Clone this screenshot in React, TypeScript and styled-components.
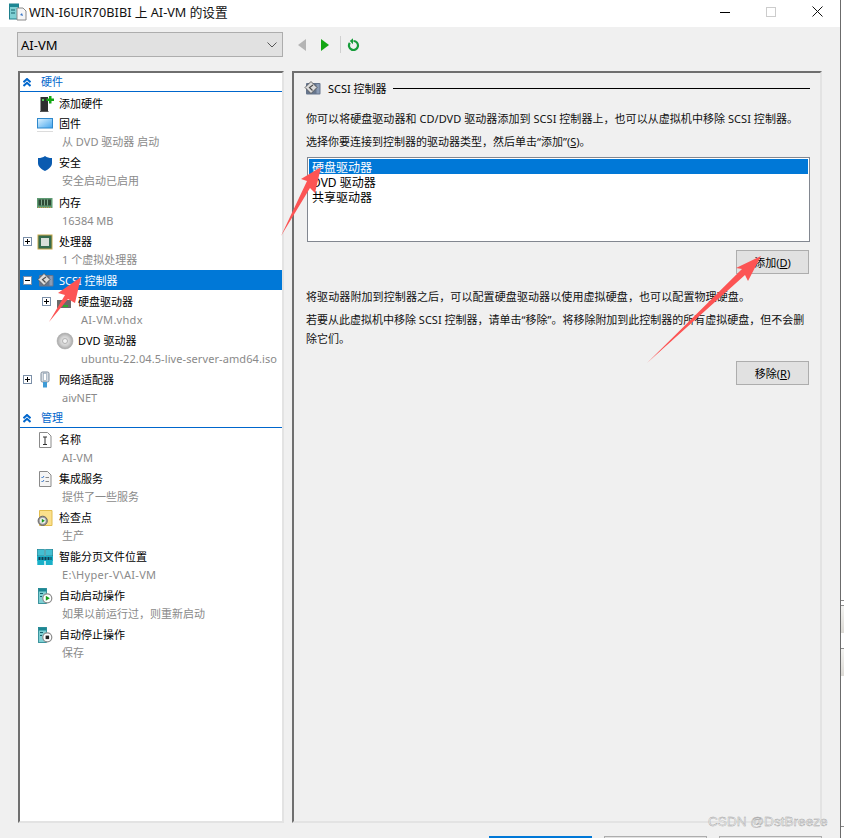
import React from "react";
import styled, { createGlobalStyle } from "styled-components";

const FONT = `"Noto Sans", "Noto Sans CJK SC", sans-serif`;

const Global = createGlobalStyle`
  html, body { margin: 0; padding: 0; background: #fff; width: 844px; height: 838px; overflow: hidden; }
  body { font-family: ${FONT}; font-size: 11px; color: #000; }
  * { box-sizing: border-box; }
`;

const Stage = styled.div`
  position: relative;
  display: flex;
  width: 844px;
  height: 838px;
  overflow: hidden;
  background: #fff;
`;
const Dialog = styled.div`
  display: flex;
  flex-direction: column;
  width: 841px;
  height: 838px;
  background: #f0f0f0;
  border-right: 1px solid #6b6b6b;
  overflow: hidden;
`;
const TitleBar = styled.header`
  display: flex;
  align-items: center;
  flex: 0 0 27px;
  padding: 0 0 4px 9px;
  background: #fff;
`;
const TitleText = styled.span`
  margin-left: 2px;
  font-size: 12.7px;
  flex: 1;
  color: #111;
`;
const WinButton = styled.div`
  display: flex;
  align-items: center;
  justify-content: center;
  width: 46px;
  height: 22px;
`;
const Toolbar = styled.div`
  display: flex;
  align-items: center;
  flex: 0 0 44px;
  padding: 0 18px 9px 17px;
`;
const VmSelect = styled.div`
  display: flex;
  align-items: center;
  justify-content: space-between;
  width: 266px;
  height: 25px;
  padding: 0 5px 0 3px;
  background: #e1e1e1;
  border: 1px solid #adadad;
  font-size: 13px;
`;
const NavGroup = styled.div`
  display: flex;
  align-items: center;
  margin-left: 15px;
`;
const NavSep = styled.span`
  width: 1px;
  height: 17px;
  margin: 0 6px 0 11px;
  background: #d0d0d0;
`;
const Body = styled.div`
  display: flex;
  gap: 8px;
  padding: 0 18px;
  flex: 0 0 752px;
`;
const Sunken = styled.section`
  height: 752px;
  border-style: solid;
  border-width: 2px;
  border-color: #6f6f6f #e3e3e3 #e3e3e3 #6f6f6f;
`;
const TreePanel = styled(Sunken)`
  width: 266px;
  background: #fff;
  overflow: hidden;
  & > :first-child {
    margin-top: -1px;
  }
`;
const SectionHead = styled.div`
  display: flex;
  align-items: center;
  height: 20px;
  margin-bottom: 1px;
  padding: 1px 0 0 3px;
  border-bottom: 1px solid #0066cc;
  color: #0066cc;
  font-size: 11px;
  line-height: 18px;
`;
const SectionLabel = styled.span`
  margin-left: 10px;
`;
const Row = styled.div<{ $depth: number; $selected?: boolean; $nudge?: boolean }>`
  display: flex;
  align-items: center;
  height: 20px;
  margin-top: ${(p) => (p.$nudge ? "1px" : "0")};
  padding-left: ${(p) => 3 + p.$depth * 19}px;
  background: ${(p) => (p.$selected ? "#0078d7" : "transparent")};
  color: ${(p) => (p.$selected ? "#fff" : "#000")};
  font-size: 11px;
  white-space: nowrap;
`;
const ExpanderSlot = styled.span`
  display: inline-flex;
  flex: 0 0 9px;
  height: 9px;
  margin-right: 5px;
`;
const Expander = styled.span<{ $open?: boolean }>`
  position: relative;
  display: block;
  width: 9px;
  height: 9px;
  background: #fff;
  border: 1px solid #7b8fa8;
  &::before {
    content: "";
    position: absolute;
    left: 1px;
    top: 3px;
    width: 5px;
    height: 1px;
    background: #000;
  }
  &::after {
    content: "";
    display: ${(p) => (p.$open ? "none" : "block")};
    position: absolute;
    left: 3px;
    top: 1px;
    width: 1px;
    height: 5px;
    background: #000;
  }
`;
const IconSlot = styled.span`
  display: inline-flex;
  flex: 0 0 18px;
  height: 18px;
  margin-right: 4px;
`;
const Sub = styled.div<{ $depth: number; $track?: number }>`
  height: 19px;
  line-height: 18px;
  padding-left: ${(p) => 42 + p.$depth * 19}px;
  color: #8a8a8a;
  font-size: 11px;
  letter-spacing: ${(p) => p.$track ?? 0}px;
  white-space: nowrap;
`;
const MainPanel = styled(Sunken)`
  width: 530px;
  padding: 7px 10px 0 12px;
  background: #f0f0f0;
`;
const MainHead = styled.div`
  display: flex;
  align-items: center;
  height: 16px;
  font-size: 11px;
  margin-left: -2px;
`;
const MainTitle = styled.span`
  margin: 0 6px;
  white-space: nowrap;
`;
const HeadRule = styled.span`
  flex: 1;
  height: 1px;
  background: #000;
`;
const Para = styled.p<{ $top: number; $lh?: number; $track?: number }>`
  margin: ${(p) => p.$top}px 0 0;
  font-size: 11px;
  line-height: ${(p) => p.$lh ?? 16}px;
  letter-spacing: ${(p) => p.$track ?? 0}px;
  color: #111;
`;
const Listbox = styled.div`
  height: 85px;
  margin: 7px 0 0 1px;
  padding: 1px;
  background: #fff;
  border: 1px solid #828790;
`;
const ListItem = styled.div<{ $selected?: boolean }>`
  height: 15px;
  padding: 2px 0 0 3px;
  line-height: 13px;
  font-size: 12px;
  white-space: nowrap;
  background: ${(p) => (p.$selected ? "#0078d7" : "transparent")};
  color: ${(p) => (p.$selected ? "#fff" : "#000")};
`;
const ButtonRow = styled.div<{ $top: number }>`
  display: flex;
  justify-content: flex-end;
  margin-top: ${(p) => p.$top}px;
  padding-right: 1px;
`;
const Btn = styled.div`
  display: flex;
  align-items: center;
  justify-content: center;
  width: 73px;
  height: 24px;
  background: #e1e1e1;
  border: 1px solid #adadad;
  font-size: 11px;
`;
const Footer = styled.div`
  display: flex;
  justify-content: flex-end;
  gap: 12px;
  padding: 13px 18px 0;
`;
const FootBtn = styled.div<{ $primary?: boolean }>`
  width: 103px;
  height: 23px;
  background: ${(p) => (p.$primary ? "#0078d7" : "#e1e1e1")};
  border: 1px solid ${(p) => (p.$primary ? "#0078d7" : "#adadad")};
`;
const EdgeStrip = styled.aside`
  flex: 1;
  display: flex;
  flex-direction: column;
`;
const EdgeTile = styled.div<{ $h: number; $tile?: boolean; $rule?: boolean }>`
  height: ${(p) => p.$h}px;
  background: ${(p) => (p.$tile ? "linear-gradient(#f4f4f2, #dcdad5)" : "#fff")};
  border-top: ${(p) => (p.$tile || p.$rule ? "1px solid #8c8c8c" : "none")};
`;
const Watermark = styled.div`
  position: absolute;
  left: 708px;
  top: 813px;
  font-family: "Liberation Sans", sans-serif;
  font-size: 13.6px;
  line-height: 18px;
  color: #f4f4f4;
  -webkit-text-stroke: 0.4px #a0a0a0;
  white-space: nowrap;
`;
const ArrowLayer = styled.svg`
  position: absolute;
  left: 0;
  top: 0;
  pointer-events: none;
`;
const Key = styled.span`
  text-decoration: underline;
`;
const Svg: React.FC<{ children: React.ReactNode }> = ({ children }) => (
  <svg width="18" height="18" viewBox="0 0 18 18" style={{ overflow: "visible" }}>{children}</svg>
);

const ScsiGlyph = () => (
  <Svg>
    <rect x="2" y="4" width="14.500" height="11.500" rx="1" fill="#66758c" />
    <rect x="12.500" y="5" width="3" height="9.500" fill="#8b9cb5" />
    <path d="M1 8.500L7 2.500l6 6-6 6z" fill="#dcdcdc" stroke="#4d4d4d" strokeWidth="0.800" />
    <path d="M9 6L5.500 8.500 8.500 11.500" fill="none" stroke="#4d4d4d" strokeWidth="1.200" />
  </Svg>
);
const ServerBase = () => (
  <>
    <rect x="1.500" y="2.500" width="8" height="15" fill="#7fd0d4" stroke="#1e7f8c" strokeWidth="0.800" />
    <rect x="1.500" y="2.500" width="8" height="3" fill="#1c8794" />
    <path d="M3 7.500h3M3 10.500h2" stroke="#14606a" strokeWidth="1" />
  </>
);
const icons: Record<string, React.ReactNode> = {
  add: (
    <Svg>
      <path d="M3 18h8.500v-1H3z" fill="#555" />
      <rect x="3.500" y="3" width="7.500" height="14" fill="#2f2f2f" />
      <rect x="5" y="5" width="2" height="2" fill="#59c75c" />
      <path d="M9.500 4.500H12V2h2.500v2.500H17V7h-2.500v2.500H12V7H9.500z" fill="#13a613" />
    </Svg>
  ),
  firmware: (
    <Svg>
      <defs>
        <linearGradient id="scr" x1="0" y1="0" x2="1" y2="1">
          <stop offset="0" stopColor="#dff3ff" />
          <stop offset="1" stopColor="#44a6ee" />
        </linearGradient>
      </defs>
      <rect x="0.500" y="4.500" width="15" height="9.500" fill="url(#scr)" stroke="#2e88cc" />
      <path d="M0 17.500h16" stroke="#dcdcdc" />
    </Svg>
  ),
  shield: (
    <Svg>
      <path d="M8 3c2 1.500 4 2 7 2v5c0 3.500-3 6-7 8-4-2-7-4.500-7-8V5c3 0 5-.5 7-2z" fill="#0a5bb0" />
    </Svg>
  ),
  memory: (
    <Svg>
      <rect x="0" y="5" width="15.500" height="10" fill="#5f9b73" />
      <path d="M1.500 6.500h12.500v6H1.500z" fill="#2d4a36" />
      <path d="M4.500 6.500v6M7.500 6.500v6M10.500 6.500v6" stroke="#7fa98c" />
      <path d="M1 14.500h14" stroke="#c69a4c" strokeDasharray="1 1" />
    </Svg>
  ),
  cpu: (
    <Svg>
      <rect x="0.500" y="2.500" width="15" height="15" fill="#c5a64a" />
      <rect x="1.500" y="3.500" width="13" height="13" fill="#356b4d" />
      <rect x="4" y="6" width="8" height="8" fill="#d9dfd8" />
    </Svg>
  ),
  scsi: <ScsiGlyph />,
  hdd: (
    <Svg>
      <rect x="1" y="8" width="14" height="8" fill="#6a6a6a" />
      <rect x="7" y="13" width="5" height="2" fill="#2fa82f" />
    </Svg>
  ),
  dvd: (
    <Svg>
      <defs>
        <radialGradient id="disc">
          <stop offset="0" stopColor="#f4f4f4" />
          <stop offset="0.600" stopColor="#cfcfcf" />
          <stop offset="1" stopColor="#a8a8a8" />
        </radialGradient>
      </defs>
      <circle cx="9" cy="10" r="8" fill="url(#disc)" stroke="#aaa" strokeWidth="0.500" />
      <circle cx="9" cy="10" r="2.500" fill="#f2f2f2" stroke="#999" strokeWidth="0.700" />
    </Svg>
  ),
  net: (
    <Svg>
      <rect x="4" y="2" width="8" height="10" rx="1.500" fill="#d8dde3" stroke="#7d8c9c" />
      <rect x="6.500" y="3.500" width="3" height="7" fill="#fff" stroke="#8da0b3" strokeWidth="0.600" />
      <rect x="6" y="12" width="4" height="5.500" fill="#3f9bd6" />
    </Svg>
  ),
  name: (
    <Svg>
      <path d="M2.500 2.500h8l3.500 3.500v11.500H2.500z" fill="#fff" stroke="#8a8a8a" />
      <path d="M6 7h4M6 14.500h4M8 7v7.500" stroke="#333" fill="none" />
    </Svg>
  ),
  integration: (
    <Svg>
      <path d="M2.500 2.500h8l3.500 3.500v11.500H2.500z" fill="#f5f5f5" stroke="#8a8a8a" />
      <path d="M4.500 8l1 1 1.500-2M4.500 12l1 1 1.500-2" stroke="#3a78c8" fill="none" />
      <path d="M8.500 8.500h3.500M8.500 12.500h3.500" stroke="#888" />
    </Svg>
  ),
  checkpoint: (
    <Svg>
      <path d="M2.500 2.500h12.500v15H2.500z" fill="#fbe08c" stroke="#e2bd4e" />
      <circle cx="5.700" cy="12.800" r="4.600" fill="#9a9a9a" stroke="#666" />
      <circle cx="5.700" cy="12.800" r="3" fill="#ececec" />
      <path d="M4.800 10.800l3 2-3 2z" fill="#1a9a1a" />
    </Svg>
  ),
  paging: (
    <Svg>
      <rect x="0.300" y="2.300" width="7" height="6.500" fill="#42bfd2" stroke="#127a8c" strokeWidth="0.600" />
      <rect x="8.700" y="2.300" width="7" height="6.500" fill="#42bfd2" stroke="#127a8c" strokeWidth="0.600" />
      <rect x="0" y="9" width="16" height="5" fill="#19b0c8" />
      <path d="M1.500 11.500h13" stroke="#0e3f55" strokeWidth="3" strokeDasharray="2 1" />
      <rect x="0.300" y="14" width="7" height="4" fill="#19b0c8" />
      <rect x="8.700" y="14" width="7" height="4" fill="#19b0c8" />
    </Svg>
  ),
  start: (
    <Svg>
      <ServerBase />
      <circle cx="10.300" cy="12.300" r="4.500" fill="#fff" stroke="#8c8c8c" strokeWidth="1.200" />
      <path d="M8.800 9.800l4 2.500-4 2.500z" fill="#18a018" />
    </Svg>
  ),
  stop: (
    <Svg>
      <ServerBase />
      <circle cx="10.300" cy="12.300" r="4.500" fill="#fff" stroke="#8c8c8c" strokeWidth="1.200" />
      <rect x="8.600" y="10.600" width="3.500" height="3.500" fill="#222" />
    </Svg>
  ),
};

const Chevrons = () => (
  <svg width="8" height="9" viewBox="0 0 8 9">
    <path d="M.5 4.200L4 1l3.500 3.200M.5 8L4 4.800 7.500 8" fill="none" stroke="#0066cc" strokeWidth="2" />
  </svg>
);

type Item = {
  name: string;
  sub?: string;
  icon: string;
  expander?: "open" | "closed";
  depth?: number;
  selected?: boolean;
  nudge?: boolean;
  track?: number;
};

const hardware: Item[] = [
  { name: "添加硬件", icon: "add" },
  { name: "固件", sub: "从 DVD 驱动器 启动", icon: "firmware" },
  { name: "安全", sub: "安全启动已启用", icon: "shield" },
  { name: "内存", sub: "16384 MB", icon: "memory", nudge: true },
  { name: "处理器", sub: "1 个虚拟处理器", icon: "cpu", expander: "closed" },
  { name: "SCSI 控制器", icon: "scsi", expander: "open", selected: true },
  { name: "硬盘驱动器", sub: "AI-VM.vhdx", icon: "hdd", expander: "closed", depth: 1, nudge: true, track: 0.3 },
  { name: "DVD 驱动器", sub: "ubuntu-22.04.5-live-server-amd64.iso", icon: "dvd", depth: 1, track: 0.09 },
  { name: "网络适配器", sub: "aivNET", icon: "net", expander: "closed" },
];
const management: Item[] = [
  { name: "名称", sub: "AI-VM", icon: "name" },
  { name: "集成服务", sub: "提供了一些服务", icon: "integration" },
  { name: "检查点", sub: "生产", icon: "checkpoint" },
  { name: "智能分页文件位置", sub: "E:\\Hyper-V\\AI-VM", icon: "paging", track: 0.3 },
  { name: "自动启动操作", sub: "如果以前运行过，则重新启动", icon: "start" },
  { name: "自动停止操作", sub: "保存", icon: "stop" },
];

const TreeItem: React.FC<{ item: Item }> = ({ item }) => {
  const depth = item.depth ?? 0;
  return (
    <>
      <Row $depth={depth} $selected={item.selected} $nudge={item.nudge}>
        <ExpanderSlot>{item.expander && <Expander $open={item.expander === "open"} />}</ExpanderSlot>
        <IconSlot>{icons[item.icon]}</IconSlot>
        {item.name}
      </Row>
      {item.sub && <Sub $depth={depth} $track={item.track}>{item.sub}</Sub>}
    </>
  );
};

export default function App() {
  return (
    <Stage>
      <Global />
      <Dialog>
        <TitleBar>
          <svg width="18" height="18" viewBox="0 0 18 18">
            <rect x="0.500" y="1" width="9" height="15" fill="#7fd0d4" stroke="#1e7f8c" />
            <rect x="0.500" y="1" width="9" height="3" fill="#1c8794" />
            <path d="M2 7h4M2 10h4" stroke="#14606a" />
            <path d="M8 5h6l3 3v9H8z" fill="#f6f6f6" stroke="#8a8a8a" />
            <path d="M11 12l2-2 1 3z" fill="#3a78c8" />
          </svg>
          <TitleText>WIN-I6UIR70BIBI 上 AI-VM 的设置</TitleText>
          <WinButton>
            <svg width="10" height="10" viewBox="0 0 10 10"><path d="M0 5.500h10" stroke="#000" /></svg>
          </WinButton>
          <WinButton>
            <svg width="10" height="10" viewBox="0 0 10 10"><rect x="0.500" y="0.500" width="9" height="9" fill="none" stroke="#ccc" /></svg>
          </WinButton>
          <WinButton>
            <svg width="11" height="11" viewBox="0 0 11 11"><path d="M.5.500l10 10M10.500.500l-10 10" stroke="#111" /></svg>
          </WinButton>
        </TitleBar>
        <Toolbar>
          <VmSelect>
            AI-VM
            <svg width="10" height="6" viewBox="0 0 10 6"><path d="M.5.500L5 5l4.500-4.500" fill="none" stroke="#555" /></svg>
          </VmSelect>
          <NavGroup>
            <svg width="8" height="12" viewBox="0 0 8 12"><path d="M8 0v12L0 6z" fill="#b4b4b4" /></svg>
            <svg width="8" height="12" viewBox="0 0 8 12" style={{ marginLeft: 15 }}><path d="M0 0v12l8-6z" fill="#13a613" /></svg>
            <NavSep />
            <svg width="13" height="13" viewBox="0 0 13 13">
              <path d="M6.500 3A4.500 4.500 0 1 1 2.800 4.900" fill="none" stroke="#169c3a" strokeWidth="2.200" />
              <path d="M6 .2v6L2.800 3z" fill="#169c3a" />
            </svg>
          </NavGroup>
        </Toolbar>
        <Body>
          <TreePanel>
            <SectionHead><Chevrons /><SectionLabel>硬件</SectionLabel></SectionHead>
            {hardware.map((item) => <TreeItem key={item.name} item={item} />)}
            <SectionHead><Chevrons /><SectionLabel>管理</SectionLabel></SectionHead>
            {management.map((item) => <TreeItem key={item.name} item={item} />)}
          </TreePanel>
          <MainPanel>
            <MainHead>
              {icons.scsi}
              <MainTitle>SCSI 控制器</MainTitle>
              <HeadRule />
            </MainHead>
            <Para $top={15} $track={0.05}>你可以将硬盘驱动器和 CD/DVD 驱动器添加到 SCSI 控制器上，也可以从虚拟机中移除 SCSI 控制器。</Para>
            <Para $top={7}>选择你要连接到控制器的驱动器类型，然后单击“添加”(<Key>S</Key>)。</Para>
            <Listbox>
              <ListItem $selected>硬盘驱动器</ListItem>
              <ListItem>DVD 驱动器</ListItem>
              <ListItem>共享驱动器</ListItem>
            </Listbox>
            <ButtonRow $top={8}><Btn>添加(<Key>D</Key>)</Btn></ButtonRow>
            <Para $top={15} $track={0.1}>将驱动器附加到控制器之后，可以配置硬盘驱动器以使用虚拟硬盘，也可以配置物理硬盘。</Para>
            <Para $top={5} $lh={19}>若要从此虚拟机中移除 SCSI 控制器，请单击“移除”。将移除附加到此控制器的所有虚拟硬盘，但不会删除它们。</Para>
            <ButtonRow $top={13}><Btn>移除(<Key>R</Key>)</Btn></ButtonRow>
          </MainPanel>
        </Body>
        <Footer>
          <FootBtn $primary />
          <FootBtn />
          <FootBtn />
        </Footer>
      </Dialog>
      <EdgeStrip>
        <EdgeTile $h={600} />
        <EdgeTile $h={5} $rule />
        <EdgeTile $h={28} $tile />
        <EdgeTile $h={15} />
        <EdgeTile $h={28} $tile />
        <EdgeTile $h={150} />
        <EdgeTile $h={12} $rule />
      </EdgeStrip>
      <ArrowLayer width="844" height="838" viewBox="0 0 844 838">
        <g fill="#fc5454">
          <path d="M81 277L75 303 68 299 49 322 65 295 58 293z" />
          <path d="M321 167L315 193 310 188 281 236 307 181 301 179z" />
          <path d="M761 256L748 281 745 275 647 363 742 269 736 268z" />
        </g>
      </ArrowLayer>
      <Watermark>CSDN @DstBreeze</Watermark>
    </Stage>
  );
}
